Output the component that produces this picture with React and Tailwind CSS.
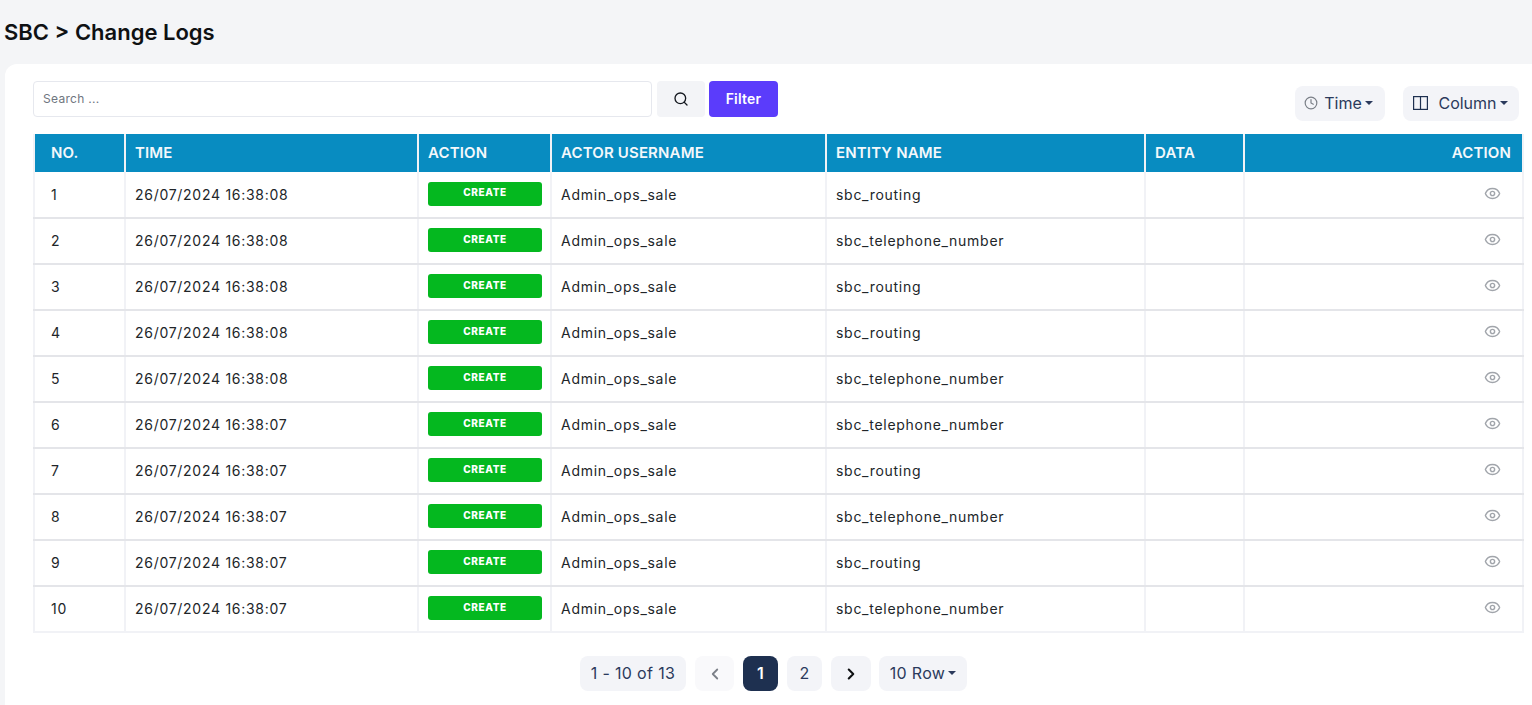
import React from "react";
import { ChevronLeft, ChevronRight, Clock, Eye, Search } from "lucide-react";

const rows = [
  ["1", "26/07/2024 16:38:08", "sbc_routing"],
  ["2", "26/07/2024 16:38:08", "sbc_telephone_number"],
  ["3", "26/07/2024 16:38:08", "sbc_routing"],
  ["4", "26/07/2024 16:38:08", "sbc_routing"],
  ["5", "26/07/2024 16:38:08", "sbc_telephone_number"],
  ["6", "26/07/2024 16:38:07", "sbc_telephone_number"],
  ["7", "26/07/2024 16:38:07", "sbc_routing"],
  ["8", "26/07/2024 16:38:07", "sbc_telephone_number"],
  ["9", "26/07/2024 16:38:07", "sbc_routing"],
  ["10", "26/07/2024 16:38:07", "sbc_telephone_number"],
];

function Caret() {
  return <span className="ml-[3px] inline-block border-x-[4px] border-t-[4px] border-x-transparent border-t-current" />;
}

function Th({ children, className = "" }) {
  return (
    <th className={`border-x-2 border-x-[#f1f2f6] bg-[#088cc1] px-[9px] text-left text-[15px] font-semibold tracking-[0.15px] text-[#f4f8fb] ${className}`}>
      {children}
    </th>
  );
}

function Td({ children, className = "" }) {
  return <td className={`border-x-2 border-b-2 border-x-[#f1f2f6] border-b-[#e4e5e9] px-[9px] text-sm tracking-[0.72px] text-[#212529] ${className}`}>{children}</td>;
}

export default function App() {
  return (
    <div className="h-[705px] overflow-hidden bg-[#f4f5f7] font-['Inter',sans-serif]">
      <h1 className="flex h-16 items-center pl-1 pt-px text-[22px] font-semibold text-[#0f1113]">SBC &gt; Change Logs</h1>
      <div className="ml-[5px] h-[641px] rounded-tl-xl bg-white pl-7 pt-[17px]">
        <div className="flex items-start justify-between pr-[13px]">
          <div className="flex items-center">
            <input
              type="text"
              placeholder="Search ..."
              className="h-9 w-[619px] rounded border border-[#e6e8ee] px-[9px] pb-px text-xs tracking-[0.3px] text-[#212529] outline-none placeholder:text-[#6f7680]"
            />
            <button className="ml-[5px] flex h-9 w-12 items-center justify-center rounded bg-[#f3f4f7] text-[#14181f]">
              <Search size={16} />
            </button>
            <button className="ml-1 h-9 w-[69px] rounded bg-[#5b3cfb] text-sm font-semibold tracking-[0.2px] text-white">Filter</button>
          </div>
          <div className="mt-[5px] flex gap-[18px] text-base text-[#2b3a5c]">
            <button className="flex h-[35px] w-[90px] items-center justify-center rounded-lg bg-[#f3f4f8] pb-px pr-[3px]">
              <Clock size={14} className="mr-[6px] text-[#7a7f87]" />
              Time
              <Caret />
            </button>
            <button className="flex h-[35px] w-[116px] items-center justify-center rounded-lg bg-[#f3f4f8] pb-px pr-px">
              <svg width="15" height="14" viewBox="0 0 15 14" fill="none" stroke="#1e3050" strokeWidth="1.2" className="mr-[10px]">
                <rect x="0.6" y="0.6" width="13.8" height="12.8" />
                <path d="M7.5 0.6V13.4" />
              </svg>
              Column
              <Caret />
            </button>
          </div>
        </div>
        <table className="mt-[13px] w-[1491px] table-fixed border-collapse">
          <colgroup>
            <col className="w-[91px]" />
            <col className="w-[293px]" />
            <col className="w-[133px]" />
            <col className="w-[275px]" />
            <col className="w-[319px]" />
            <col className="w-[99px]" />
            <col className="w-[279px]" />
          </colgroup>
          <thead>
            <tr className="h-[38px]">
              <Th className="pl-4">NO.</Th>
              <Th>TIME</Th>
              <Th>ACTION</Th>
              <Th>ACTOR USERNAME</Th>
              <Th>ENTITY NAME</Th>
              <Th>DATA</Th>
              <Th className="pr-[11px] text-right">ACTION</Th>
            </tr>
          </thead>
          <tbody>
            {rows.map((row, i) => (
              <tr key={row[0]} className="h-[46px]">
                <Td className={`pl-4 ${i === 9 ? "border-b-[#f1f2f6]" : ""}`}>{row[0]}</Td>
                <Td className={i === 9 ? "border-b-[#f1f2f6]" : ""}>{row[1]}</Td>
                <Td className={i === 9 ? "border-b-[#f1f2f6]" : ""}>
                  <span className="mb-[2px] flex h-6 w-[114px] items-center justify-center rounded-[3px] bg-[#04b81f] pb-[2px] text-[10px] font-extrabold tracking-[0.6px] text-white">
                    CREATE
                  </span>
                </Td>
                <Td className={i === 9 ? "border-b-[#f1f2f6]" : ""}>Admin_ops_sale</Td>
                <Td className={i === 9 ? "border-b-[#f1f2f6]" : ""}>{row[2]}</Td>
                <Td className={i === 9 ? "border-b-[#f1f2f6]" : ""} />
                <Td className={i === 9 ? "border-b-[#f1f2f6]" : ""}>
                  <Eye size={17} strokeWidth={2} className="mb-[3px] ml-auto mr-3 text-[#a1a5ab]" />
                </Td>
              </tr>
            ))}
          </tbody>
        </table>
        <div className="mt-[23px] flex justify-center pr-[18px] text-base tracking-[0.35px] text-[#2b3a5c]">
          <div className="flex h-[35px] w-[106px] items-center justify-center rounded-lg bg-[#f3f4f8] pb-px">1 - 10 of 13</div>
          <button className="ml-[9px] flex h-[35px] w-[39px] items-center justify-center rounded-lg bg-[#f9f9fb] text-[#7c8088]">
            <ChevronLeft size={18} strokeWidth={2.4} />
          </button>
          <button className="ml-[9px] flex h-[35px] w-[35px] items-center justify-center rounded-lg bg-[#1e3050] pb-px font-semibold text-white">1</button>
          <button className="ml-[9px] flex h-[35px] w-[35px] items-center justify-center rounded-lg bg-[#f3f4f8] pb-px">2</button>
          <button className="ml-[9px] flex h-[35px] w-10 items-center justify-center rounded-lg bg-[#f3f4f8] text-[#0f1113]">
            <ChevronRight size={18} strokeWidth={2.8} />
          </button>
          <button className="ml-2 flex h-[35px] w-[88px] items-center justify-center rounded-lg bg-[#f3f4f8] pb-[2px]">
            10 Row
            <Caret />
          </button>
        </div>
      </div>
    </div>
  );
}
